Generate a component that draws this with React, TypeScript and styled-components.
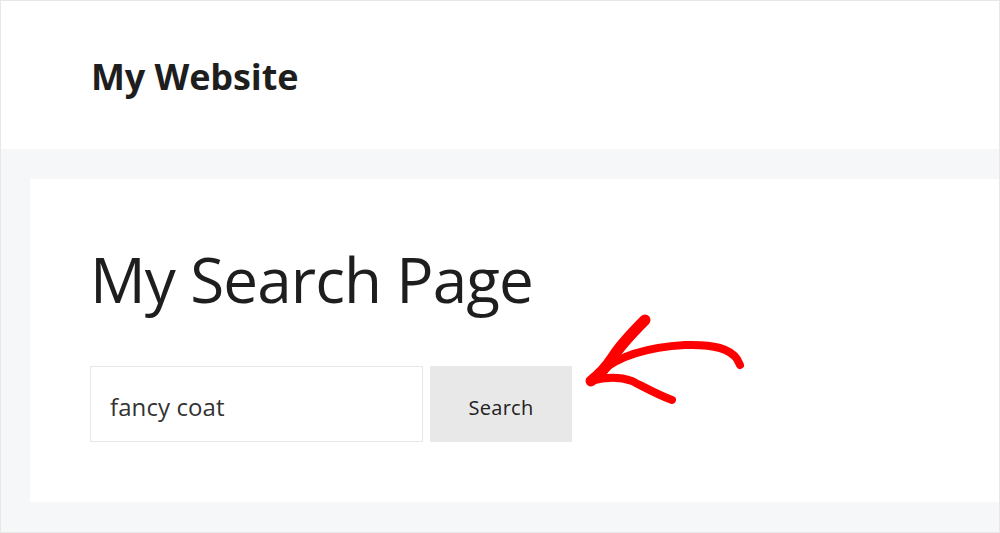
import React from "react";
import styled, { createGlobalStyle } from "styled-components";

const Global = createGlobalStyle`
  html, body { margin: 0; padding: 0; background: #ffffff; }
  * { box-sizing: border-box; }
  body { font-family: "Open Sans", "Noto Sans", sans-serif; color: #222; }
`;

const Frame = styled.div`
  width: 1000px;
  height: 533px;
  border: 1px solid #e7e7e7;
  background: #f6f7f9;
  display: flex;
  flex-direction: column;
  overflow: hidden;
`;

const Header = styled.header`
  height: 148px;
  background: #ffffff;
  display: flex;
  align-items: center;
  padding-left: 90px;
  padding-top: 2px;
`;

const SiteTitle = styled.div`
  font-family: "Open Sans", sans-serif;
  font-weight: 700;
  font-size: 36px;
  letter-spacing: -0.1px;
  color: #1e1e1e;
`;

const Main = styled.main`
  flex: 1;
  padding: 30px 0 30px 29px;
  display: flex;
`;

const Card = styled.section`
  flex: 1;
  background: #ffffff;
  padding: 58px 0 0 60px;
  position: relative;
`;

const Title = styled.h1`
  margin: 0;
  font-family: "Open Sans", sans-serif;
  font-weight: 400;
  font-size: 62px;
  line-height: 84px;
  letter-spacing: -0.9px;
  color: #1e1e1e;
`;

const Form = styled.form`
  margin-top: 45px;
  display: flex;
  gap: 7px;
  height: 76px;
`;

const Input = styled.div`
  width: 333px;
  height: 76px;
  border: 1px solid #e6e6e6;
  display: flex;
  align-items: center;
  padding: 4px 0 0 19px;
  font-size: 24px;
  letter-spacing: 0.1px;
  color: #333;
`;

const Button = styled.button`
  width: 142px;
  height: 76px;
  border: none;
  background: #e8e8e8;
  font-family: "Open Sans", sans-serif;
  font-size: 20px;
  letter-spacing: 0.3px;
  color: #222;
  padding: 6px 0 0 0;
`;

const Arrow = styled.svg`
  position: absolute;
  left: 550px;
  top: 130px;
  overflow: visible;
`;

export default function App() {
  return (
    <>
      <Global />
      <Frame>
        <Header>
          <SiteTitle>My Website</SiteTitle>
        </Header>
        <Main>
          <Card>
            <Title>My Search Page</Title>
            <Form onSubmit={(e) => e.preventDefault()}>
              <Input>fancy coat</Input>
              <Button type="button">Search</Button>
            </Form>
            <Arrow width="200" height="100" viewBox="0 0 200 100">
              <g fill="none" stroke="#ff0000" strokeLinecap="round" strokeLinejoin="round">
                <path d="M65 11 C52 24 40 37 33 48 C29 54 24 62 11 72" strokeWidth="11" />
                <path d="M20 63 C40 46 70 38 105 36 C135 35 150 40 157 50 L160 56" strokeWidth="8" />
                <path d="M11 72 C25 68 38 67 52 72 C64 78 78 86 92 91" strokeWidth="8" />
              </g>
            </Arrow>
          </Card>
        </Main>
      </Frame>
    </>
  );
}
